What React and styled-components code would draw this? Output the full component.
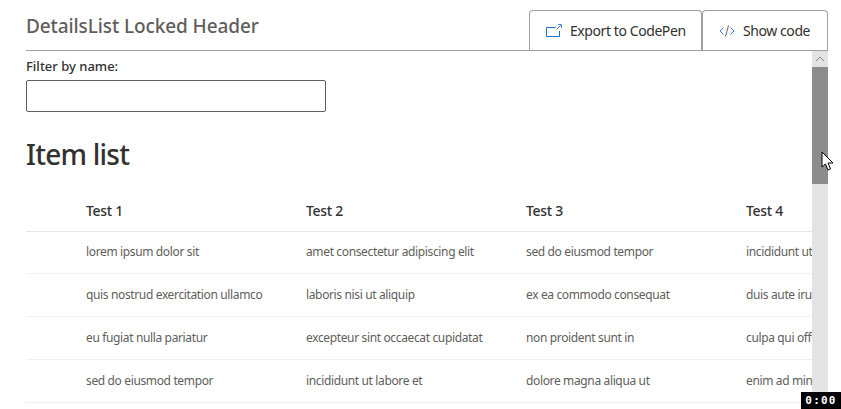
import React from "react"
import styled, { createGlobalStyle } from "styled-components"

const columns = ["Test 1", "Test 2", "Test 3", "Test 4"]

const rows = [
  ["lorem ipsum dolor sit", "amet consectetur adipiscing elit", "sed do eiusmod tempor", "incididunt ut labore"],
  ["quis nostrud exercitation ullamco", "laboris nisi ut aliquip", "ex ea commodo consequat", "duis aute irure"],
  ["eu fugiat nulla pariatur", "excepteur sint occaecat cupidatat", "non proident sunt in", "culpa qui officia"],
  ["sed do eiusmod tempor", "incididunt ut labore et", "dolore magna aliqua ut", "enim ad minim"],
]

export default function App() {
  return (
    <Page>
      <GlobalStyle />
      <Header>
        <Title>DetailsList Locked Header</Title>
        <Tabs>
          <Tab $width={173}>
            <svg width="16" height="14" viewBox="0 0 16 14" fill="none" stroke="#1f6fd0" strokeWidth="1">
              <path d="M9.5 3.5H0.5V12.5H13.5V7" />
              <path d="M10.5 5.5L15 1M12 0.5H15.5V4" stroke="#4a8fe0" />
            </svg>
            Export to CodePen
          </Tab>
          <Tab $width={126}>
            <svg width="16" height="12" viewBox="0 0 16 12" fill="none" stroke="#3f78d8" strokeWidth="1">
              <path d="M4.5 2.5L1 6L4.5 9.5M11.5 2.5L15 6L11.5 9.5" />
              <path d="M9.5 0.5L6.5 11.5" stroke="#5a6078" />
            </svg>
            Show code
          </Tab>
        </Tabs>
      </Header>
      <Body>
        <Content>
          <FilterLabel>Filter by name:</FilterLabel>
          <FilterInput />
          <ListTitle>Item list</ListTitle>
          <HeaderRow>
            {columns.map((c) => (
              <HeaderCell key={c}>{c}</HeaderCell>
            ))}
          </HeaderRow>
          {rows.map((row) => (
            <Row key={row[0]}>
              {row.map((cell) => (
                <Cell key={cell}>{cell}</Cell>
              ))}
            </Row>
          ))}
        </Content>
        <Scrollbar>
          <ScrollArrow>
            <svg width="10" height="6" viewBox="0 0 10 6" fill="none" stroke="#8a8a8a" strokeWidth="1">
              <path d="M1 5L5 1L9 5" />
            </svg>
          </ScrollArrow>
          <ScrollThumb />
        </Scrollbar>
      </Body>
      <Cursor width="14" height="21" viewBox="0 0 14 21">
        <path d="M1 1V16L4.5 13L7 19L9.5 18L7 12H12Z" fill="#fff" stroke="#000" strokeWidth="1" />
      </Cursor>
      <Timer>0:00</Timer>
    </Page>
  )
}

const GlobalStyle = createGlobalStyle`
  html, body {
    margin: 0;
    padding: 0;
    background: #fff;
  }
`

const Page = styled.div`
  position: relative;
  width: 841px;
  height: 409px;
  overflow: hidden;
  background: #fff;
  font-family: "Noto Sans", "Open Sans", sans-serif;
  color: #323130;
`

const Header = styled.div`
  display: flex;
  justify-content: space-between;
  align-items: flex-end;
  box-sizing: border-box;
  width: 802px;
  height: 51px;
  margin-left: 26px;
  border-bottom: 1px solid #a19f9d;
`

const Title = styled.h1`
  align-self: flex-start;
  margin: 12px 0 0;
  font-size: 19px;
  line-height: 28px;
  font-weight: 500;
  letter-spacing: -0.1px;
  color: #605e5c;
`

const Tabs = styled.div`
  display: flex;
`

const Tab = styled.div`
  display: flex;
  align-items: center;
  gap: 8px;
  box-sizing: border-box;
  width: ${(props) => props.$width}px;
  height: 40px;
  padding-left: 16px;
  border: 1px solid #a19f9d;
  border-bottom: none;
  border-radius: 4px 4px 0 0;
  font-size: 14px;
  letter-spacing: -0.42px;
  white-space: nowrap;
  color: #323130;
`

const Body = styled.div`
  display: flex;
  margin-left: 26px;
  width: 802px;
  height: 358px;
`

const Content = styled.div`
  flex: 1;
  min-width: 0;
  overflow: hidden;
`

const FilterLabel = styled.div`
  margin-top: 6px;
  font-size: 13px;
  line-height: 18px;
  font-weight: 500;
  letter-spacing: 0;
  color: #323130;
`

const FilterInput = styled.input`
  display: block;
  box-sizing: border-box;
  width: 300px;
  height: 32px;
  margin-top: 5px;
  border: 1px solid #605e5c;
  border-radius: 2px;
  background: #fff;
`

const ListTitle = styled.h2`
  margin: 24px 0 0;
  font-size: 28px;
  line-height: 36px;
  font-weight: 500;
  letter-spacing: -0.75px;
  color: #323130;
`

const HeaderRow = styled.div`
  display: grid;
  grid-template-columns: repeat(4, 220px);
  align-items: center;
  box-sizing: border-box;
  height: 53px;
  margin-top: 7px;
  padding: 10px 0 0 60px;
  border-bottom: 1px solid #e6e6e6;
`

const HeaderCell = styled.div`
  font-size: 14px;
  font-weight: 500;
  letter-spacing: -0.3px;
  white-space: nowrap;
  color: #323130;
`

const Row = styled.div`
  display: grid;
  grid-template-columns: repeat(4, 220px);
  align-items: center;
  box-sizing: border-box;
  height: 43px;
  padding: 0 0 2px 60px;
  border-bottom: 1px solid #f0f0f0;

  ${HeaderRow} + & {
    height: 42px;
  }
`

const Cell = styled.div`
  font-size: 12px;
  letter-spacing: -0.36px;
  white-space: nowrap;
  color: #605e5c;
`

const Scrollbar = styled.div`
  width: 16px;
  flex: none;
  background: #e3e3e3;
`

const ScrollArrow = styled.div`
  display: flex;
  align-items: center;
  justify-content: center;
  height: 16px;
`

const ScrollThumb = styled.div`
  height: 117px;
  background: #8c8c8c;
`

const Cursor = styled.svg`
  position: absolute;
  left: 821px;
  top: 151px;
`

const Timer = styled.div`
  position: absolute;
  right: 0;
  bottom: 0;
  width: 40px;
  height: 17px;
  background: #000;
  color: #fff;
  font-family: "DejaVu Sans Mono", monospace;
  font-size: 11px;
  font-weight: 700;
  line-height: 17px;
  letter-spacing: 1.2px;
  text-align: center;
`
